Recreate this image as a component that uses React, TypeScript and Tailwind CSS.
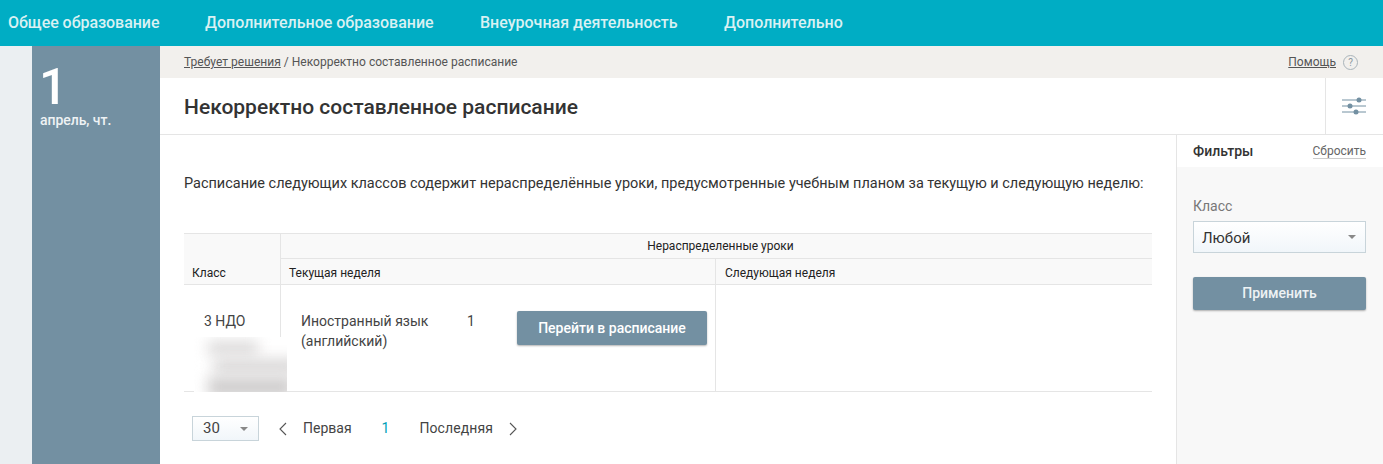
const nav = [
  { label: "Общее образование", cls: "w-[205px] pl-2 tracking-[-0.05px]" },
  { label: "Дополнительное образование", cls: "w-[275px]" },
  { label: "Внеурочная деятельность", cls: "w-[244px]" },
  { label: "Дополнительно", cls: "" },
];

function Caret() {
  return <span className="w-0 h-0 border-x-[4px] border-x-transparent border-t-[4px] border-t-[#888]" />;
}

function SlidersIcon() {
  return (
    <svg width="24" height="18" viewBox="0 0 24 18" className="text-[#7390a2] mr-[2px]">
      <path d="M0 3h24M0 9h24M0 15h24" stroke="currentColor" strokeWidth="1" />
      <circle cx="17" cy="3" r="2.5" fill="currentColor" />
      <circle cx="8" cy="9" r="2.5" fill="currentColor" />
      <circle cx="14" cy="15" r="2.5" fill="currentColor" />
    </svg>
  );
}

function Chevron({ dir }: { dir: "left" | "right" }) {
  return (
    <svg width="9" height="14" viewBox="0 0 9 14" fill="none" stroke="#555" strokeWidth="1.1">
      <path d={dir === "left" ? "M8 1 2 7l6 6" : "M1 1l6 6-6 6"} />
    </svg>
  );
}

export default function App() {
  return (
    <div className="h-[464px] w-[1383px] overflow-hidden bg-white font-['Roboto',sans-serif] text-[#333]">
      <header className="h-[46px] bg-[#00adc4] flex items-center text-[16px] font-medium text-[#d9f1f3]">
        {nav.map((n) => (
          <a key={n.label} className={n.cls}>{n.label}</a>
        ))}
      </header>

      <div className="flex h-[418px]">
        <div className="w-[32px] bg-[#ebeff2]" />
        <aside className="w-[128px] bg-[#7390a2] text-white pl-[8px]">
          <div className="text-[50px] leading-[50px] font-medium mt-[16px] ml-[-1px]">1</div>
          <div className="text-[14px] font-medium leading-[16px] text-[#eef2f4] tracking-[-0.05px]">апрель, чт.</div>
        </aside>

        <main className="flex-1 flex flex-col min-w-0">
          <div className="h-[32px] bg-[#f2f0ed] flex items-center justify-between pl-[24px] pr-[25px] text-[12.04px] text-[#555]">
            <div>
              <span className="underline">Требует решения</span> / Некорректно составленное расписание
            </div>
            <div className="flex items-center gap-[7px]">
              <span className="underline">Помощь</span>
              <span className="w-[15px] h-[15px] rounded-full border border-[#a9b4ba] text-[#8a979e] text-[10px] leading-[13px] text-center">?</span>
            </div>
          </div>

          <div className="h-[57px] flex border-b border-[#e5e5e5]">
            <h1 className="flex-1 pl-[24px] pt-[15px] text-[21px] leading-[28px] font-medium text-[#333]">
              Некорректно составленное расписание
            </h1>
            <div className="w-[58px] border-l border-[#e5e5e5] flex items-center justify-center">
              <SlidersIcon />
            </div>
          </div>

          <div className="flex flex-1 min-h-0">
            <div className="w-[1016px] pl-[24px] pr-[24px]">
              <p className="text-[14.48px] leading-[20px] mt-[39px] text-[#333] whitespace-nowrap">
                Расписание следующих классов содержит нераспределённые уроки, предусмотренные учебным планом за текущую и следующую неделю:
              </p>

              <div className="relative mt-[39px] w-[968px] border-t border-b border-[#e5e5e5] text-[12px] text-[#222]">
                <div className="flex h-[51px] bg-[#f9f9f9] border-b border-[#e5e5e5]">
                  <div className="w-[96px] flex items-end pl-[8px] pb-[2px]">Класс</div>
                  <div className="flex-1 border-l border-[#e5e5e5] flex flex-col">
                    <div className="h-[25px] border-b border-[#e5e5e5] flex items-center justify-center pl-[8px]">
                      Нераспределенные уроки
                    </div>
                    <div className="flex flex-1">
                      <div className="w-[434px] pl-[8px] flex items-center pt-[2px]">Текущая неделя</div>
                      <div className="flex-1 border-l border-[#e5e5e5] pl-[9px] flex items-center pt-[2px]">Следующая неделя</div>
                    </div>
                  </div>
                </div>
                <div className="flex h-[106px] text-[14px] text-[#444]">
                  <div className="w-[96px] pl-[20px] pt-[26px] leading-[20px]">3 НДО</div>
                  <div className="w-[435px] border-l border-[#e5e5e5] flex">
                    <div className="w-[186px] pl-[20px] pt-[26px] leading-[20px]">
                      Иностранный язык
                      <br />
                      (английский)
                    </div>
                    <div className="w-[50px] pt-[26px] leading-[20px]">1</div>
                    <div className="pt-[26px]">
                      <button className="w-[190px] h-[34px] rounded-[2px] bg-[#7390a2] text-white text-[14px] font-medium shadow-[0_1px_2px_rgba(0,0,0,0.3)]">
                        Перейти в расписание
                      </button>
                    </div>
                  </div>
                  <div className="flex-1 border-l border-[#e5e5e5]" />
                </div>

                {/* blurred-out patch over the class cell */}
                <div className="absolute left-[10px] top-[103px] w-[93px] h-[55px] bg-white overflow-hidden">
                  <div className="absolute left-[14px] top-[4px] w-[50px] h-[14px] bg-[#dcdada] blur-[7px]" />
                  <div className="absolute left-[20px] top-[22px] w-[85px] h-[14px] bg-[#d8d6d6] blur-[7px]" />
                  <div className="absolute left-[14px] top-[40px] w-[85px] h-[20px] bg-[#cfcdcd] blur-[7px]" />
                </div>
              </div>

              <div className="flex items-center mt-[24px] ml-[8px] text-[14px] text-[#444]">
                <div className="w-[67px] h-[25px] border border-[#c8d4da] bg-linear-to-b from-white to-[#f1f6fa] flex items-center justify-between pl-[10px] pr-[10px] text-[15px]">
                  30 <Caret />
                </div>
                <span className="ml-[19px] flex"><Chevron dir="left" /></span>
                <span className="ml-[16px]">Первая</span>
                <span className="ml-[30px] text-[#00a0b8]">1</span>
                <span className="ml-[30px] tracking-[0.1px]">Последняя</span>
                <span className="ml-[16px] flex"><Chevron dir="right" /></span>
              </div>
            </div>

            <aside className="w-[207px] border-l border-[#e5e5e5] flex flex-col">
              <div className="h-[32px] flex items-center justify-between pl-[16px] pr-[17px]">
                <span className="text-[14px] font-medium text-[#333]">Фильтры</span>
                <span className="text-[12px] text-[#666] border-b border-[#ccc] leading-[14px]">Сбросить</span>
              </div>
              <div className="flex-1 bg-[#f8f8f8] pl-[16px] pr-[17px] pt-[31px]">
                <div className="text-[14px] leading-[16px] text-[#777]">Класс</div>
                <div className="mt-[7px] h-[32px] border border-[#c8d4da] bg-linear-to-b from-white to-[#f1f6fa] flex items-center justify-between pl-[8px] pr-[9px] text-[15px] text-[#333]">
                  <span className="pt-[3px]">Любой</span> <Caret />
                </div>
                <button className="mt-[24px] w-full h-[33px] rounded-[2px] bg-[#7390a2] text-[#eef2f4] text-[14px] font-medium shadow-[0_1px_2px_rgba(0,0,0,0.3)]">
                  Применить
                </button>
              </div>
            </aside>
          </div>
        </main>
      </div>
    </div>
  );
}
